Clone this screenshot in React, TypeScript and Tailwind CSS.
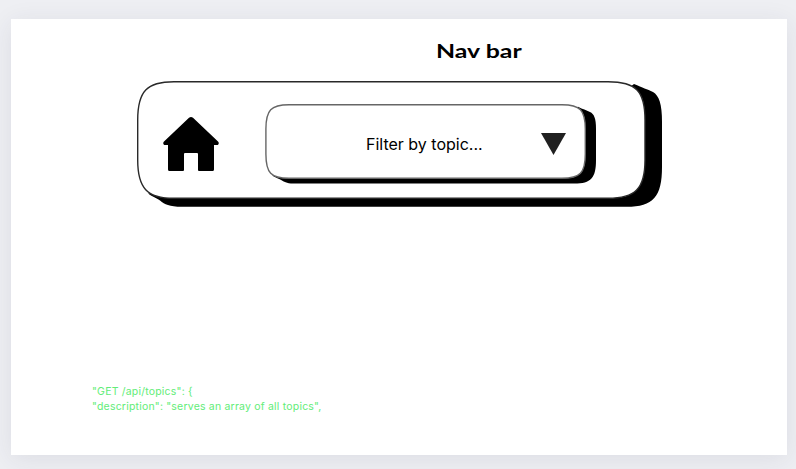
import React from "react";

function OuterFrame() {
  return (
    <svg className="absolute inset-0 h-full w-full" viewBox="137 81 525 126" aria-hidden="true">
      <path d="M148 193.5 C153 197 156 197.5 160 200.5 C165 204.5 169 206.6 182 206.8 H626 C653 207 662 197 662 167 V122 C662 104 659 95.5 653 92 C647 89 643 88 634 84 L600 110 L180 190 Z" fill="#000" />
      <path d="M174 81.7 H608 C636 81.7 645 91 645 120 V160 C645 189 635 198.3 608 198.3 H174 C147 198.3 137.7 188 137.7 160 V120 C137.7 91 147 81.7 174 81.7 Z" fill="#fff" stroke="#292929" strokeWidth="1.4" />
    </svg>
  );
}

function FilterFrame() {
  return (
    <svg className="absolute inset-0 h-full w-full" viewBox="265 104 331 80" aria-hidden="true">
      <path d="M272 175.5 C276 178 279 178.5 282 180.5 C285 182.5 288 183.6 296 183.6 H574 C591 183.7 596 178 596 160 V129 C596 118 594 114 590 112 C586 110 583 109.5 578 106.8 L560 120 L290 175 Z" fill="#000" />
      <path d="M289 104.7 H562 C580 104.7 585.3 110 585.3 129 V154 C585.3 173 580 178.3 562 178.3 H289 C271 178.3 265.9 173 265.9 154 V129 C265.9 110 271 104.7 289 104.7 Z" fill="#fff" stroke="#666" strokeWidth="1.4" />
    </svg>
  );
}

export default function App() {
  return (
    <div className="h-[469px] w-[796px] overflow-hidden bg-[#eeeff3] px-[11px] pt-[19px] font-['Inter',sans-serif]">
      <main className="h-[436px] w-[776px] bg-white pt-[18px] shadow-[0_4px_24px_rgba(40,45,80,0.09)]">
        <h1 className="ml-[425px] h-[26px] w-[100px] origin-left scale-x-[1.38] whitespace-nowrap font-['Lato',sans-serif] text-[18px] leading-[28px] font-bold text-black">Nav bar</h1>
        <nav className="relative mt-[18px] ml-[126px] h-[126px] w-[525px]">
          <OuterFrame />
          <div className="relative flex pt-[23px] pl-[26px]">
            <svg className="mt-[13px] h-[54px] w-[56px]" viewBox="0 0 56 54" aria-label="Home">
              <path d="M26 .8 Q28 -.6 30 .8 L55 24.5 C56.5 26 55.5 28 54 28 H51 V52.5 Q51 54 49.5 54 H36 Q35 54 35 53 V37 Q35 36 34 36 H22 Q21 36 21 37 V53 Q21 54 20 54 H6.5 Q5 54 5 52.5 V28 H2 C.5 28 -.5 26 1 24.5 Z" />
            </svg>
            <div className="relative ml-[46px] h-[80px] w-[331px]">
              <FilterFrame />
              <div className="relative flex h-[80px] items-center pl-[101px]">
                <span className="w-[117px] whitespace-nowrap text-[16px] leading-6 text-black">Filter by topic...</span>
                <svg className="ml-[58px] h-[22px] w-[25px]" viewBox="0 0 25 22" aria-hidden="true">
                  <path d="M0 0H25L12.5 22Z" fill="#202020" />
                </svg>
              </div>
            </div>
          </div>
        </nav>
        <pre className="mt-[177px] ml-[81px] font-['Inter',sans-serif] text-[10.5px] leading-[15px] tracking-[0.2px] text-[#62ed78]">{`"GET /api/topics": {\n"description": "serves an array of all topics",`}</pre>
      </main>
    </div>
  );
}
